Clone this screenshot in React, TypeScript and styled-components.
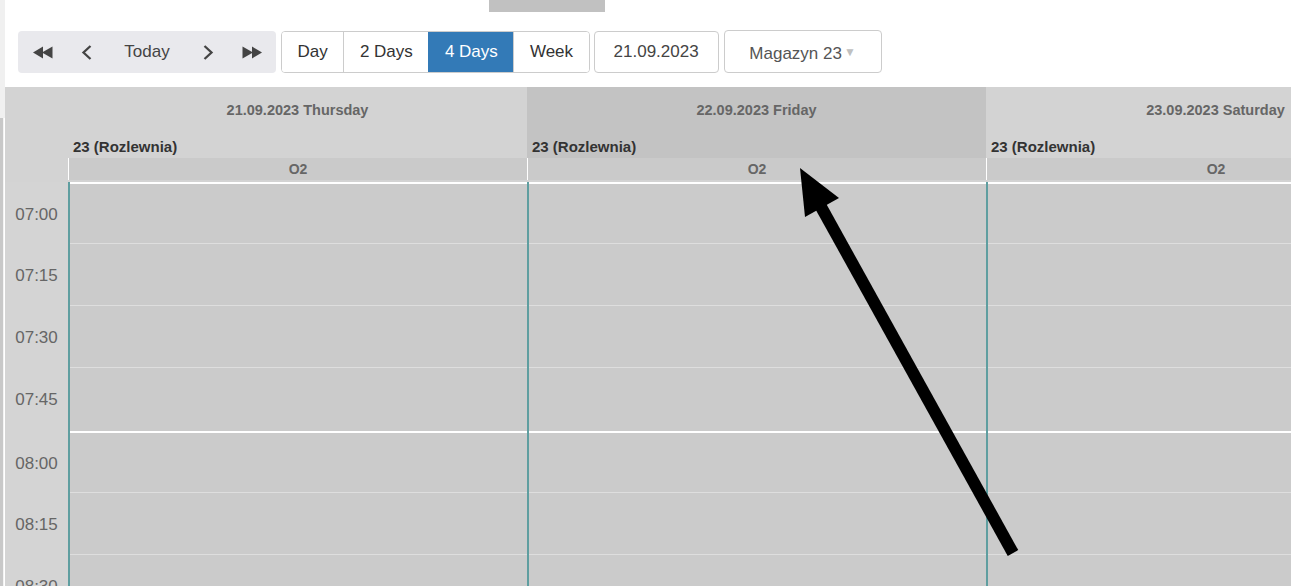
import React from "react";
import styled, { createGlobalStyle } from "styled-components";

const GlobalStyle = createGlobalStyle`
  html, body { margin: 0; padding: 0; height: 100%; overflow: hidden; background: #fff; }
  body { font-family: "Liberation Sans", Arial, sans-serif; }
  #root { height: 100%; }
  * { box-sizing: border-box; }
`;

const FONT = `"Liberation Sans", Arial, sans-serif`;

const Page = styled.div`
  position: relative;
  display: flex;
  width: 1291px;
  height: 586px;
  overflow: hidden;
  background: #fff;
`;

const LeftRail = styled.div`
  width: 5px;
  flex: none;
  display: flex;
  flex-direction: column;
`;

const RailTop = styled.div`
  height: 118px;
  background: #f0f0f0;
`;

const RailBottom = styled.div`
  flex: 1;
  background: #f3f3f3;
  border-left: 3px solid #c8c8c8;
  margin-right: 1px;
`;

const Main = styled.div`
  flex: 1;
  min-width: 0;
  display: flex;
  flex-direction: column;
  overflow: hidden;
`;

const TopStrip = styled.div`
  height: 12px;
  flex: none;
  padding-left: 484px;
`;

const ScrollStub = styled.div`
  width: 116px;
  height: 12px;
  background: #c1c1c1;
`;

const Toolbar = styled.div`
  display: flex;
  align-items: stretch;
  gap: 5px;
  height: 42px;
  margin: 19px 0 14px 13px;
  flex: none;
`;

const NavGroup = styled.div`
  display: flex;
  background: #e9e9ed;
  border-radius: 4px;
`;

const NavButton = styled.button<{ $w: number }>`
  width: ${(p) => p.$w}px;
  border: none;
  background: transparent;
  padding: 0;
  display: flex;
  align-items: center;
  justify-content: center;
  color: #444;
  font: 17px ${FONT};
`;

const ViewGroup = styled.div`
  display: flex;
  border: 1px solid #ccc;
  border-radius: 4px;
  overflow: hidden;
  background: #fff;
`;

const ViewButton = styled.button<{ $active?: boolean }>`
  font: 17px ${FONT};
  padding: 0 15.55px;
  border: none;
  border-left: 1px solid ${(p) => (p.$active ? "#337ab7" : "#ccc")};
  background: ${(p) => (p.$active ? "#337ab7" : "#fff")};
  color: ${(p) => (p.$active ? "#fff" : "#333")};
  &:first-child {
    border-left: none;
  }
`;

const DateBox = styled.div`
  width: 125px;
  border: 1px solid #ccc;
  border-radius: 4px;
  display: flex;
  align-items: center;
  justify-content: center;
  font: 17px ${FONT};
  color: #444;
  margin-left: -1px;
`;

const SelectBox = styled.div`
  width: 158px;
  border: 1px solid #ccc;
  border-radius: 4px;
  display: flex;
  align-items: center;
  justify-content: center;
  padding-top: 4px;
  margin-top: -1px;
  font: 17px ${FONT};
  color: #555;
`;

const Caret = styled.span`
  font-size: 12px;
  color: #c0c0c0;
  margin-left: 2px;
  margin-top: -3px;
`;

const Calendar = styled.div`
  flex: 1;
  display: flex;
  flex-direction: column;
  overflow: hidden;
  background: #d3d3d3;
`;

const HeaderRow = styled.div`
  display: grid;
  grid-template-columns: 63px repeat(3, 459px);
  height: 95px;
  flex: none;
`;

const TimeCorner = styled.div`
  background: #d3d3d3;
`;

const DayHeader = styled.div`
  display: flex;
  flex-direction: column;
  background: #d3d3d3;
`;

const DayTop = styled.div<{ $today?: boolean }>`
  height: 71px;
  background: ${(p) => (p.$today ? "#c3c3c3" : "#d3d3d3")};
  display: flex;
  flex-direction: column;
`;

const DateLabel = styled.div`
  height: 46px;
  display: flex;
  align-items: center;
  justify-content: center;
  font: bold 14.5px ${FONT};
  color: #666;
`;

const ResourceLabel = styled.div`
  height: 25px;
  padding: 3px 0 0 5px;
  font: bold 15px/22px ${FONT};
  color: #333;
  white-space: nowrap;
`;

const SubHeader = styled.div`
  height: 22px;
  background: #cacaca;
  border-left: 1px solid #fff;
  display: flex;
  align-items: center;
  justify-content: center;
  font: bold 14px ${FONT};
  color: #666;
`;

const Body = styled.div`
  display: grid;
  grid-template-columns: 63px repeat(3, 459px);
  align-items: start;
  flex: 1;
  overflow: hidden;
`;

const TimeColumn = styled.div`
  background: #d4d4d4;
  display: flex;
  flex-direction: column;
`;

const DayColumn = styled.div`
  border-left: 2px solid #5f9ea0;
  background: #cbcbcb;
  display: flex;
  flex-direction: column;
`;

const HourBlock = styled.div<{ $grid?: boolean }>`
  border-top: 2px solid ${(p) => (p.$grid ? "#fff" : "transparent")};
  display: flex;
  flex-direction: column;
`;

const Slot = styled.div<{ $h: number; $line?: boolean }>`
  height: ${(p) => p.$h}px;
  flex: none;
  border-bottom: ${(p) => (p.$line ? "1px solid #dedede" : "none")};
`;

const TimeSlot = styled.div<{ $h: number }>`
  height: ${(p) => p.$h}px;
  flex: none;
  display: flex;
  align-items: center;
  justify-content: center;
  padding-top: 1px;
  font: 17px ${FONT};
  color: #666;
`;

const Overlay = styled.svg`
  position: absolute;
  left: 0;
  top: 0;
  pointer-events: none;
`;

const SLOT_HEIGHTS = [60, 62, 62, 63];
const HOURS = ["07", "08"];
const MINUTES = ["00", "15", "30", "45"];

const days = [
  { date: "21.09.2023 Thursday", today: false },
  { date: "22.09.2023 Friday", today: true },
  { date: "23.09.2023 Saturday", today: false },
];

const DoubleLeft = () => (
  <svg width="20" height="13" viewBox="0 0 20 13">
    <polygon points="0,6.5 10,0.5 10,12.5" fill="#444" />
    <polygon points="9,6.5 19.5,0.5 19.5,12.5" fill="#444" />
  </svg>
);

const DoubleRight = () => (
  <svg width="20" height="13" viewBox="0 0 20 13">
    <polygon points="0.5,0.5 11,6.5 0.5,12.5" fill="#444" />
    <polygon points="10,0.5 20,6.5 10,12.5" fill="#444" />
  </svg>
);

const ChevronLeft = () => (
  <svg width="12" height="15" viewBox="0 0 12 15">
    <polyline points="9.5,1 2.5,7.5 9.5,14" fill="none" stroke="#444" strokeWidth="2.3" />
  </svg>
);

const ChevronRight = () => (
  <svg width="12" height="15" viewBox="0 0 12 15">
    <polyline points="2.5,1 9.5,7.5 2.5,14" fill="none" stroke="#444" strokeWidth="2.3" />
  </svg>
);

export default function App() {
  return (
    <>
      <GlobalStyle />
      <Page>
        <LeftRail>
          <RailTop />
          <RailBottom />
        </LeftRail>
        <Main>
          <TopStrip>
            <ScrollStub />
          </TopStrip>
          <Toolbar>
            <NavGroup>
              <NavButton $w={49}><DoubleLeft /></NavButton>
              <NavButton $w={40}><ChevronLeft /></NavButton>
              <NavButton $w={80}>Today</NavButton>
              <NavButton $w={41}><ChevronRight /></NavButton>
              <NavButton $w={48}><DoubleRight /></NavButton>
            </NavGroup>
            <ViewGroup>
              <ViewButton>Day</ViewButton>
              <ViewButton>2 Days</ViewButton>
              <ViewButton $active>4 Days</ViewButton>
              <ViewButton>Week</ViewButton>
            </ViewGroup>
            <DateBox>21.09.2023</DateBox>
            <SelectBox>
              Magazyn 23<Caret>▼</Caret>
            </SelectBox>
          </Toolbar>
          <Calendar>
            <HeaderRow>
              <TimeCorner />
              {days.map((d) => (
                <DayHeader key={d.date}>
                  <DayTop $today={d.today}>
                    <DateLabel>{d.date}</DateLabel>
                    <ResourceLabel>23 (Rozlewnia)</ResourceLabel>
                  </DayTop>
                  <SubHeader>O2</SubHeader>
                </DayHeader>
              ))}
            </HeaderRow>
            <Body>
              <TimeColumn>
                {HOURS.map((h) => (
                  <HourBlock key={h}>
                    {MINUTES.map((m, i) => (
                      <TimeSlot key={m} $h={SLOT_HEIGHTS[i]}>
                        {h}:{m}
                      </TimeSlot>
                    ))}
                  </HourBlock>
                ))}
              </TimeColumn>
              {days.map((d) => (
                <DayColumn key={d.date}>
                  {HOURS.map((h) => (
                    <HourBlock key={h} $grid>
                      {MINUTES.map((m, i) => (
                        <Slot key={m} $h={SLOT_HEIGHTS[i]} $line={i < 3} />
                      ))}
                    </HourBlock>
                  ))}
                </DayColumn>
              ))}
            </Body>
          </Calendar>
        </Main>
        <Overlay width="1291" height="586" viewBox="0 0 1291 586">
          <line x1="820" y1="205" x2="1013" y2="553" stroke="#000" strokeWidth="12" />
          <polygon points="800,168 805,217 839,198" fill="#000" />
        </Overlay>
      </Page>
    </>
  );
}
